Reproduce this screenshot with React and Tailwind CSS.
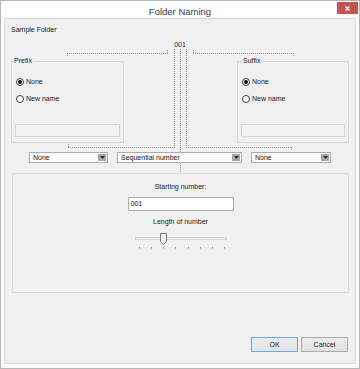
import React from 'react';

function Radio({ checked, label, className }) {
    return (
        <div className={`flex items-center h-[9px] ${className}`}>
            <span className="w-[8px] h-[8px] rounded-full border border-[#3a3a3a] bg-white flex items-center justify-center">
                {checked && <span className="w-[4px] h-[4px] rounded-full bg-[#111]" />}
            </span>
            <span className="ml-[2px] text-[7px] leading-[9px]">{label}</span>
        </div>
    );
}

function Combo({ width, value }) {
    return (
        <div className={`${width} h-[11px] border border-[#acacac] bg-[#fbfbfb] flex items-center justify-between pl-[3px] pr-[1px]`}>
            <span className="text-[7px] leading-[9px]">{value}</span>
            <span className="w-[8px] h-[7px] bg-[#a8a8a8] flex items-center justify-center">
                <svg width="5" height="3" viewBox="0 0 5 3">
                    <path d="M0 0H5L2.5 3Z" fill="#2b2b2b" />
                </svg>
            </span>
        </div>
    );
}

function Group({ title, width, legendMargin, boxWidth }) {
    return (
        <fieldset className={`${width} h-[86px] border border-[#d8d8d8]`}>
            <legend className={`${legendMargin} px-[1px] text-[7px] leading-[8px]`}>{title}</legend>
            <Radio checked label="None" className="mt-[12px] ml-[4px]" />
            <Radio label="New name" className="mt-[8px] ml-[4px]" />
            <div className={`${boxWidth} h-[13px] mt-[21px] ml-[3px] border border-[#d6d6d6] bg-[#f3f3f3]`} />
        </fieldset>
    );
}

export default function App() {
    const ticks = [137, 149, 161, 173, 186, 198, 210, 222];

    return (
        <div className="relative w-[360px] h-[369px] border border-[#b7b7b7] bg-white flex flex-col font-['Liberation_Sans',Arial,sans-serif] text-[#1a1a1a]">
            {/* Title bar */}
            <div className="relative h-[17px] shrink-0 flex justify-center pt-[5px]">
                <span className="text-[9.5px] leading-[11px] text-[#3c3c3c]">Folder Naming</span>
                <div className="absolute right-[1px] top-[1px] w-[21px] h-[12px] bg-[#c75050] flex items-center justify-center">
                    <svg width="5" height="5" viewBox="0 0 5 5">
                        <path d="M0.5 0.5L4.5 4.5M4.5 0.5L0.5 4.5" stroke="#fff" strokeWidth="1.2" />
                    </svg>
                </div>
            </div>

            {/* Body */}
            <div className="mx-[3px] mb-[4px] flex-1 border border-[#d9d9d9] bg-[#f0f0f0] flex flex-col">
                <div className="pt-[7px] pl-[6px] text-[7px] leading-[8px]">Sample Folder</div>
                <div className="mt-[7px] text-center text-[7px] leading-[8px]">001</div>

                {/* Prefix / Suffix */}
                <div className="mt-[8px] px-[6px] flex justify-between">
                    <Group title="Prefix" width="w-[113px]" legendMargin="ml-[1px]" boxWidth="w-[105px]" />
                    <Group title="Suffix" width="w-[112px]" legendMargin="ml-[4px]" boxWidth="w-[104px]" />
                </div>

                {/* Combos */}
                <div className="mt-[9px] pl-[24px] flex gap-[9px]">
                    <Combo width="w-[79px]" value="None" />
                    <Combo width="w-[125px]" value="Sequential number" />
                    <Combo width="w-[80px]" value="None" />
                </div>

                {/* Numbering settings */}
                <div className="mt-[10px] ml-[7px] mr-[6px] h-[120px] border border-[#dcdcdc] flex flex-col items-center">
                    <div className="mt-[9px] text-[7px] leading-[8px]">Starting number:</div>
                    <div className="mt-[6px] w-[106px] h-[14px] border border-[#abadb3] bg-white flex items-center pl-[2px] text-[7px]">001</div>
                    <div className="mt-[7px] text-[7px] leading-[8px]">Length of number</div>
                    <svg className="mt-[6px]" width="94" height="18" viewBox="132 232 94 18">
                        <rect x="133.5" y="237.5" width="91" height="2" fill="#e7eaea" stroke="#d6d6d6" />
                        {ticks.map(t => (
                            <rect key={t} x={t} y="247" width="1" height="1.5" fill="#9a9a9a" />
                        ))}
                        <path d="M158.5 233.5H164.5V241.5L161.5 244.5L158.5 241.5Z" fill="#ececec" stroke="#7a7a7a" />
                    </svg>
                </div>

                {/* Buttons */}
                <div className="mt-auto pr-[7px] pb-[11px] flex justify-end gap-[3px]">
                    <button className="w-[47px] h-[15px] border border-[#68a9ea] bg-[linear-gradient(#ececec,#e2e2e2)] text-[7px] leading-[13px]">OK</button>
                    <button className="w-[47px] h-[15px] border border-[#adadad] bg-[linear-gradient(#ececec,#e2e2e2)] text-[7px] leading-[13px]">Cancel</button>
                </div>
            </div>

            {/* Connector lines */}
            <svg className="absolute left-[-1px] top-[-1px] pointer-events-none" width="360" height="369" viewBox="0 0 360 369">
                <g stroke="#949494" strokeWidth="1" strokeDasharray="1 1" fill="none">
                    <path d="M67 53.5H168" />
                    <path d="M67.5 53V57" />
                    <path d="M167.5 50V54" />
                    <path d="M193 53.5H294" />
                    <path d="M193.5 50V54" />
                    <path d="M293.5 53V57" />
                    <path d="M174.5 49V147" />
                    <path d="M180.5 49V152" />
                    <path d="M180.5 163V173" />
                    <path d="M186.5 49V147" />
                    <path d="M68 147.5H175" />
                    <path d="M68.5 144V148" />
                    <path d="M186 147.5H292" />
                    <path d="M291.5 147V151" />
                </g>
            </svg>
        </div>
    );
}
